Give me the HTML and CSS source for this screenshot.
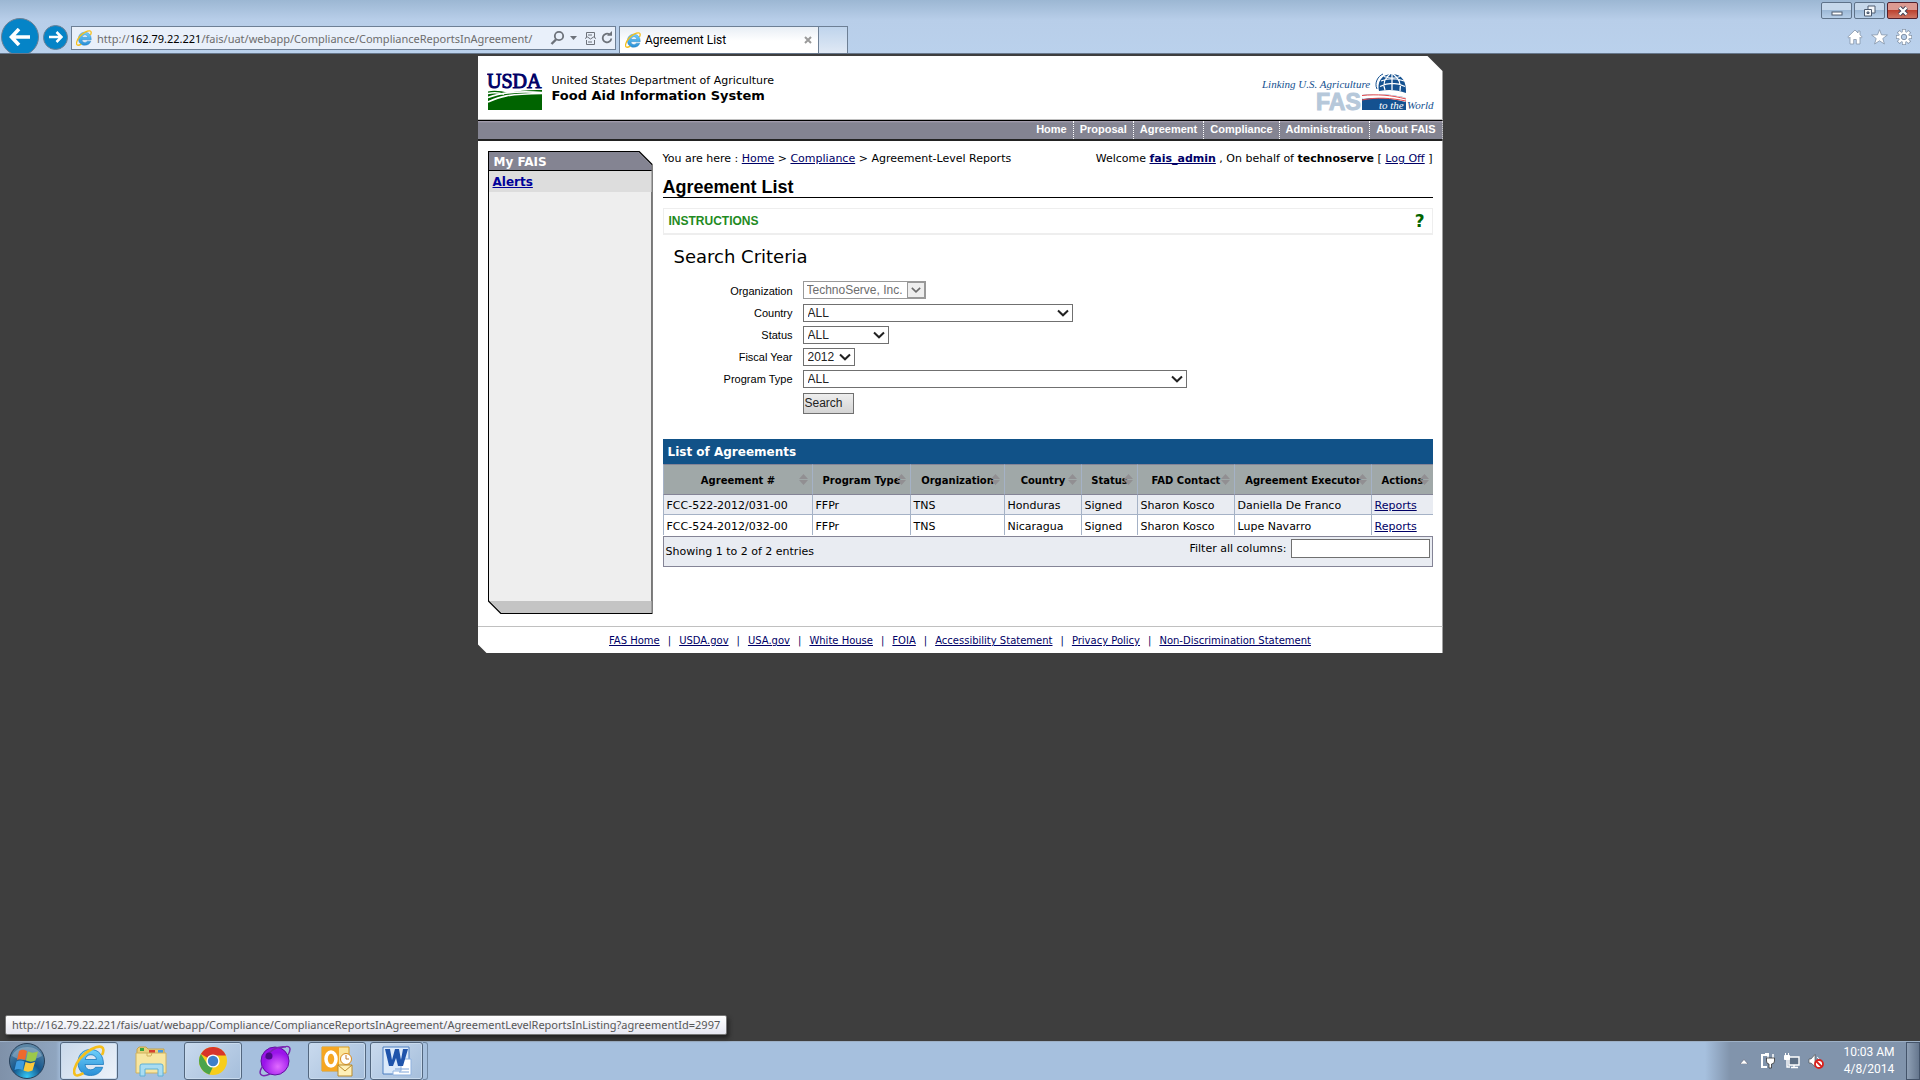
FILE: index.html
```html
<!DOCTYPE html>
<html lang="en">
<head>
    <meta charset="UTF-8">
    <meta name="viewport" content="width=device-width, initial-scale=1.0">
    <title>Agreement List</title>
    <link rel="stylesheet" href="styles.css">
</head>
<body>
    <!-- shared shapes -->
    <svg width="0" height="0" class="defs">
        <defs>
            <linearGradient id="ieBlue" x1="0" y1="0" x2="0" y2="1">
                <stop offset="0" stop-color="#6fd0fb"/>
                <stop offset="1" stop-color="#2a8fd6"/>
            </linearGradient>
            <symbol id="ie" viewBox="0 0 32 32">
                <path d="M30.500 19.500H12c.4 3.600 2.500 5.300 5.500 5.300 2.300 0 4-.9 4.900-2.500h7.300C27.800 27.500 23.600 30.500 17.500 30.500 9.800 30.500 5 25.300 5 17.500S10 4.500 17.700 4.500 30.500 10 30.500 19.500zM12.200 14.500h11.300c-.3-3-2.500-4.800-5.600-4.800s-5.200 1.800-5.700 4.800z" fill="url(#ieBlue)" stroke="#1b78bd" stroke-width=".8"/>
                <path d="M29 10c2-4 1.800-7-.4-8C24 .2 13 6 7 13.500 1.500 20.500-.5 28 2.500 30c1.900 1.200 4.700.2 8-1.800" fill="none" stroke="#f5bf1c" stroke-width="2.600"/>
            </symbol>
            <symbol id="sort" viewBox="0 0 9 11">
                <path d="M4.500 0L9 5H0zM4.500 11L0 6h9z" fill="#918f92"/>
            </symbol>
            <symbol id="chevron" viewBox="0 0 12 8">
                <path d="M1 1.500L6 6.300 11 1.500" fill="none" stroke="currentColor" stroke-width="2"/>
            </symbol>
        </defs>
    </svg>

    <header class="browser">
        <div class="nav-buttons">
            <button class="nav-button back" aria-label="Back">
                <svg width="22" height="18" viewBox="0 0 22 18"><path d="M10 1L2.500 9l7.500 8M3 9h18" fill="none" stroke="#fff" stroke-width="3.600"/></svg>
            </button>
            <button class="nav-button forward" aria-label="Forward">
                <svg width="14" height="12" viewBox="0 0 14 12"><path d="M7.500 1L12.500 6l-5 5M12.500 6H0" fill="none" stroke="#fff" stroke-width="2.500"/></svg>
            </button>
        </div>
        <div class="address">
            <svg width="16" height="16"><use href="#ie"/></svg>
            <span class="url">http://<b>162.79.22.221</b>/fais/uat/webapp/Compliance/ComplianceReportsInAgreement/</span>
            <svg width="66" height="16" viewBox="0 0 66 16" fill="none" stroke="#6d727a">
                <circle cx="10" cy="6" r="4.200" stroke-width="1.800"/>
                <path d="M7 9.500L2.500 14" stroke-width="2.400"/>
                <path d="M21 6h7l-3.500 4z" fill="#6d727a" stroke="none"/>
                <path d="M37.500 7V2.500h8V7M37.500 10v4.500h8V10M36 8.500l2.500-1.500 3 2 3-2 2.500 1.500M39 5h4M39 12h4"/>
                <path d="M60.500 4.500a4.300 4.300 0 1 0 1.800 4" stroke-width="1.800"/>
                <path d="M58 5.800h5V1z" fill="#6d727a" stroke="none"/>
            </svg>
        </div>
        <div class="tab">
            <svg width="16" height="16"><use href="#ie"/></svg>
            <span class="tab-title">Agreement List</span>
            <svg width="8" height="8" viewBox="0 0 8 8"><path d="M1 1l6 6M7 1L1 7" stroke="#9a9a9a" stroke-width="2"/></svg>
        </div>
        <div class="new-tab"></div>
        <div class="browser-right">
            <div class="window-buttons">
                <button aria-label="Minimize"><svg width="12" height="12" viewBox="0 0 12 12"><rect x="1" y="7" width="10" height="3" fill="#fff" stroke="#4c5a6e"/></svg></button>
                <button aria-label="Restore"><svg width="14" height="12" viewBox="0 0 14 12" fill="#f4f7fa" stroke="#4c5a6e"><path d="M5 1h7v7H5z"/><path d="M1.500 4.500h7v6.500h-7z"/><path d="M4 7h2v1.500H4z" fill="#90a6c2"/></svg></button>
                <button class="close" aria-label="Close"><svg width="12" height="10" viewBox="0 0 12 10"><path d="M2.500 1.500l7 7M9.500 1.500l-7 7" stroke="#3a3f55" stroke-width="4.200"/><path d="M2.500 1.500l7 7M9.500 1.500l-7 7" stroke="#fff" stroke-width="2.400"/></svg></button>
            </div>
            <div class="tools">
                <svg width="16" height="16" viewBox="0 0 16 16" fill="#fff" stroke="#8494a8" stroke-width=".8"><path d="M8 1L.8 8l1.200 1.200 1-1V15h3.700v-4.500h2.600V15H13V8.200l1 1L15.200 8 13 5.800V2h-2v2z"/></svg>
                <svg width="17" height="16" viewBox="0 0 17 16" fill="#fff" stroke="#8494a8" stroke-width=".8"><path d="M8.500.7l2 5.100 5.900.2-4.600 3.500 1.600 5.500-4.900-3.200L3.600 15l1.600-5.500L.6 6l5.900-.2z"/></svg>
                <svg width="16" height="16" viewBox="0 0 16 16"><g stroke="#8494a8" stroke-width="4"><path d="M8 0v16M0 8h16M2.300 2.300l11.400 11.400M13.700 2.300L2.300 13.700"/></g><g stroke="#fff" stroke-width="2.600"><path d="M8 .7v14.600M.7 8h14.600M2.800 2.800l10.400 10.400M13.200 2.800L2.800 13.200"/></g><circle cx="8" cy="8" r="5" fill="#fff"/><circle cx="8" cy="8" r="2.700" fill="#b8cee9" stroke="#8494a8"/></svg>
            </div>
        </div>
    </header>

    <main class="viewport">
        <div class="page">
            <div class="banner">
                <svg width="56" height="40" viewBox="0 0 56 40" class="usda" role="img" aria-label="USDA">
                    <text x="0" y="17" class="usda-text">USDA</text>
                    <path d="M1 20.500c6-1.500 14-.5 20 1.500 11-2.400 22-3.400 34-3v20H1z" fill="#006400"/>
                    <path d="M1 22.500c7-1.500 12-.6 16 .8M1 26.500c14-5.500 33-6.500 54-5M1 31c12-5.500 19-8 54-8.500" fill="none" stroke="#fff" stroke-width="1.600"/>
                </svg>
                <div class="banner-title">
                    <span>United States Department of Agriculture</span>
                    <strong>Food Aid Information System</strong>
                </div>
                <svg width="178" height="48" viewBox="0 0 178 48" class="fas" role="img" aria-label="Linking U.S. Agriculture to the World">
                    <text x="2" y="17" class="fas-script">Linking U.S. Agriculture</text>
                    <text x="56" y="39" class="fas-big">FAS</text>
                    <path d="M102 24c14-2 30-1 44 3v12h-44z" fill="#145190"/>
                    <path d="M102 26c15-2 29-1 44 3" fill="none" stroke="#fff" stroke-width="4"/>
                    <path d="M102 24.500c15-1.500 29-.5 44 3.500M102 29c15-3 29-2 44 1" fill="none" stroke="#e3474b"/>
                    <path d="M119 20c-2-8 2-17 13-17s14.500 9 14 19c-8-3-17-4-27-2z" fill="#145190"/>
                    <path d="M120 15.500c8-4 17-4 25 0M121 10c7-3 16-3 23 0M124 5.500c5 2 11 2 16 0M130 3c-6 5-7 11-5 16M133 3c7 5 8 12 7 17M132 3v16" fill="none" stroke="#fff" stroke-width="1.300"/>
                    <path d="M117 18c-3-6 1-13 6-15" fill="none" stroke="#145190"/>
                    <text x="119" y="38" class="fas-script on-blue">to the</text>
                    <text x="147" y="38" class="fas-script">World</text>
                </svg>
            </div>

            <nav class="menu">
                <a href="#">Home</a>
                <a href="#">Proposal</a>
                <a href="#">Agreement</a>
                <a href="#">Compliance</a>
                <a href="#">Administration</a>
                <a href="#">About FAIS</a>
            </nav>

            <div class="columns">
                <aside class="sidebar">
                    <div class="sidebar-inner">
                        <h2>My FAIS</h2>
                        <a href="#">Alerts</a>
                        <div class="sidebar-foot"></div>
                    </div>
                </aside>

                <section class="content">
                    <div class="crumbs">
                        <div>You are here : <a href="#">Home</a> &gt; <a href="#">Compliance</a> &gt; Agreement-Level Reports</div>
                        <div>Welcome <a href="#"><b>fais_admin</b></a> , On behalf of <b>technoserve</b> [ <a href="#">Log Off</a> ]</div>
                    </div>
                    <h1>Agreement List</h1>
                    <div class="instructions">
                        <span>INSTRUCTIONS</span>
                        <span class="help">?</span>
                    </div>

                    <h3>Search Criteria</h3>
                    <form class="criteria">
                        <label for="organization">Organization</label>
                        <div class="select disabled">
                            <select id="organization" disabled><option>TechnoServe, Inc.</option></select>
                            <svg width="10" height="8"><use href="#chevron"/></svg>
                        </div>
                        <label for="country">Country</label>
                        <div class="select country">
                            <select id="country"><option>ALL</option></select>
                            <svg width="12" height="8"><use href="#chevron"/></svg>
                        </div>
                        <label for="status">Status</label>
                        <div class="select status">
                            <select id="status"><option>ALL</option></select>
                            <svg width="12" height="8"><use href="#chevron"/></svg>
                        </div>
                        <label for="year">Fiscal Year</label>
                        <div class="select year">
                            <select id="year"><option>2012</option></select>
                            <svg width="12" height="8"><use href="#chevron"/></svg>
                        </div>
                        <label for="program">Program Type</label>
                        <div class="select program">
                            <select id="program"><option>ALL</option></select>
                            <svg width="12" height="8"><use href="#chevron"/></svg>
                        </div>
                        <button type="button">Search</button>
                    </form>

                    <h4>List of Agreements</h4>
                    <table class="agreements">
                        <colgroup>
                            <col class="c-number"><col class="c-type"><col class="c-org"><col class="c-country">
                            <col class="c-status"><col class="c-contact"><col class="c-executor"><col class="c-actions">
                        </colgroup>
                        <thead>
                            <tr>
                                <th>Agreement #<svg width="9" height="11"><use href="#sort"/></svg></th>
                                <th>Program Type<svg width="9" height="11"><use href="#sort"/></svg></th>
                                <th>Organization<svg width="9" height="11"><use href="#sort"/></svg></th>
                                <th>Country<svg width="9" height="11"><use href="#sort"/></svg></th>
                                <th>Status<svg width="9" height="11"><use href="#sort"/></svg></th>
                                <th>FAD Contact<svg width="9" height="11"><use href="#sort"/></svg></th>
                                <th>Agreement Executor<svg width="9" height="11"><use href="#sort"/></svg></th>
                                <th>Actions<svg width="9" height="11"><use href="#sort"/></svg></th>
                            </tr>
                        </thead>
                        <tbody>
                            <tr>
                                <td>FCC-522-2012/031-00</td>
                                <td>FFPr</td>
                                <td>TNS</td>
                                <td>Honduras</td>
                                <td>Signed</td>
                                <td>Sharon Kosco</td>
                                <td>Daniella De Franco</td>
                                <td><a href="#">Reports</a></td>
                            </tr>
                            <tr>
                                <td>FCC-524-2012/032-00</td>
                                <td>FFPr</td>
                                <td>TNS</td>
                                <td>Nicaragua</td>
                                <td>Signed</td>
                                <td>Sharon Kosco</td>
                                <td>Lupe Navarro</td>
                                <td><a href="#">Reports</a></td>
                            </tr>
                        </tbody>
                    </table>
                    <div class="table-foot">
                        <span>Showing 1 to 2 of 2 entries</span>
                        <div class="filter">
                            <label for="filter">Filter all columns:</label>
                            <input type="text" id="filter">
                        </div>
                    </div>
                </section>
            </div>

            <footer class="links">
                <a href="#">FAS Home</a><i>|</i>
                <a href="#">USDA.gov</a><i>|</i>
                <a href="#">USA.gov</a><i>|</i>
                <a href="#">White House</a><i>|</i>
                <a href="#">FOIA</a><i>|</i>
                <a href="#">Accessibility Statement</a><i>|</i>
                <a href="#">Privacy Policy</a><i>|</i>
                <a href="#">Non-Discrimination Statement</a>
            </footer>
        </div>
        <div class="status-tip">http://162.79.22.221/fais/uat/webapp/Compliance/ComplianceReportsInAgreement/AgreementLevelReportsInListing?agreementId=2997</div>
    </main>

    <div class="taskbar">
        <button class="start" aria-label="Start">
            <svg width="38" height="38" viewBox="0 0 38 38">
                <defs>
                    <radialGradient id="orb" cx=".5" cy=".95" r=".9">
                        <stop offset="0" stop-color="#35c8f5"/>
                        <stop offset=".45" stop-color="#14568c"/>
                        <stop offset="1" stop-color="#5d87a6"/>
                    </radialGradient>
                </defs>
                <circle cx="19" cy="19" r="17.500" fill="url(#orb)" stroke="#28405a"/>
                <path d="M4 14C8 3 29 1 34 14c-9 5-21 6-30 0z" fill="#fff" opacity=".25"/>
                <path d="M11 9c3-2 5-1.500 8 0l-2 9c-3-1.500-5-1.500-8 0z" fill="#ee6a2c"/>
                <path d="M20 9.500c3 1.500 6 1.500 10 0l-2.500 9c-3 1.500-6 1.500-9.500 0z" fill="#9cc84a"/>
                <path d="M8.500 19.500c3-1.500 5-1.500 8 0l-2 8.500c-3-1.500-5-1.500-8 0z" fill="#3e9be0"/>
                <path d="M17.500 20c3.500 1.500 6 1.500 9.500 0l-2.500 8.500c-3 1.500-6 1.500-9 0z" fill="#fbc93b"/>
            </svg>
        </button>
        <button class="task active" aria-label="Internet Explorer"><svg width="32" height="32"><use href="#ie"/></svg></button>
        <button class="task idle" aria-label="Windows Explorer">
            <svg width="32" height="32" viewBox="0 0 32 32">
                <path d="M2 4l2-2h7l2 2h16v6H2z" fill="#e9cf7a" stroke="#c4a24d"/>
                <path d="M5 3h4v3H5z" fill="#3aa63e"/><path d="M14 5h6v3h-6z" fill="#d8412f"/><path d="M23 5h5v3h-5z" fill="#4a9be0"/>
                <path d="M1 8h30v20H1z" fill="#f7e6a1" stroke="#d1b25e"/>
                <path d="M12 8v3h4l1-3" fill="none" stroke="#d1b25e"/>
                <path d="M5 31V21q0-2 2-2h19q2 0 2 2v10h-5v-7H10v7z" fill="#a9dcf2" stroke="#5fb0d6"/>
            </svg>
        </button>
        <button class="task" aria-label="Chrome">
            <svg width="32" height="32" viewBox="0 0 32 32">
                <circle cx="16" cy="16" r="14" fill="#f7cd1b"/>
                <path d="M16 16L3.900 9A14 14 0 0 1 29 10.500H16z" fill="#d8352a"/>
                <path d="M3.900 9l7 11 5 2-3.500 7.500A14 14 0 0 1 3.900 9z" fill="#4aa44a"/>
                <circle cx="16" cy="16" r="6.600" fill="#fff"/><circle cx="16" cy="16" r="5.200" fill="#3f7fc9"/>
            </svg>
        </button>
        <button class="task idle" aria-label="Browser">
            <svg width="32" height="32" viewBox="0 0 32 32">
                <defs><radialGradient id="violet" cx=".6" cy=".7"><stop offset="0" stop-color="#e06bff"/><stop offset="1" stop-color="#9a14ea"/></radialGradient></defs>
                <circle cx="16" cy="16" r="14" fill="url(#violet)" stroke="#6210a0"/>
                <path d="M4 21C-2 29 2 33 11 29M22 3c9-4 11 0 7 7M6 13C12 4 20 1 27 2" fill="none" stroke="#7a27b0" stroke-width="1.500"/>
                <circle cx="10" cy="11" r="3.500" fill="#4e0a8c"/>
            </svg>
        </button>
        <button class="task" aria-label="Outlook">
            <svg width="32" height="32" viewBox="0 0 32 32">
                <path d="M1 2h27v24H1z" fill="#fbe49a" stroke="#d99a1b"/>
                <path d="M1 2h17v24H1z" fill="#f5a623"/>
                <ellipse cx="10" cy="14" rx="5" ry="7" fill="none" stroke="#fff" stroke-width="3.500"/>
                <circle cx="25" cy="14" r="5.500" fill="#fff" stroke="#d98b1b"/>
                <path d="M25 10v4h3" fill="none" stroke="#c0762a"/>
                <path d="M17 20h14v11H17z" fill="#fff0b8" stroke="#b98b2c"/><path d="M17 20l7 6 7-6" fill="none" stroke="#b98b2c"/>
            </svg>
        </button>
        <button class="task word" aria-label="Word">
            <svg width="32" height="32" viewBox="0 0 32 32">
                <path d="M2 2h26v27H2z" fill="#dceafa" stroke="#4d7fc0"/>
                <path d="M20 14h10v16H12v-4h8z" fill="#fff" stroke="#8fb2e0"/>
                <path d="M14 24h14M18 27h10" stroke="#7da3d8"/>
                <path d="M4 4h5l2 11 3-11h4l2 11 2-11h5l-5 17h-5l-2-8-3 8H8z" fill="#1f54ab"/>
            </svg>
        </button>
        <span class="stack"></span>
        <div class="tray">
            <svg width="8" height="5" viewBox="0 0 8 5"><path d="M0 5l4-4.500L8 5z" fill="#fff" stroke="#556"  stroke-width=".5"/></svg>
            <svg width="16" height="16" viewBox="0 0 16 16"><path d="M8 2H2v12h5M5 1h3v2" fill="none" stroke="#fff" stroke-width="2"/><path d="M8 1v4M13 1v4" stroke="#fff" stroke-width="1.500"/><path d="M6.500 5h8v3q0 3-3 3v4H9v-4q-2.500 0-2.500-3z" fill="#fff" stroke="#333" stroke-width=".8"/></svg>
            <svg width="16" height="16" viewBox="0 0 16 16"><path d="M5 4h10v8H5z" fill="#5f7186" stroke="#fff" stroke-width="1.400"/><path d="M7 14.500h7M10 12v2M3 7v7h3" stroke="#fff" stroke-width="1.400" fill="none"/><path d="M.5 2.500h5v4h-5zM1.500 0v3M4.500 0v3" fill="#fff" stroke="#fff"/></svg>
            <svg width="16" height="16" viewBox="0 0 16 16"><path d="M1 6h2l4-4.500v12L3 10H1z" fill="#fff" stroke="#444" stroke-width=".6"/><path d="M9 4q2 1 2 3" fill="none" stroke="#fff"/><circle cx="11" cy="11" r="4" fill="#fff" stroke="#d8201c" stroke-width="1.800"/><path d="M8 8l6 6" stroke="#d8201c" stroke-width="1.800"/></svg>
            <div class="clock"><span>10:03 AM</span><span>4/8/2014</span></div>
        </div>
        <span class="show-desktop"></span>
    </div>
</body>
</html>
```

FILE: styles.css
```css
* {
    box-sizing: border-box;
}

body {
    margin: 0;
    min-height: 100vh;
    display: flex;
    flex-direction: column;
    background: #3e3e3e;
    color: #000;
    font-family: "DejaVu Sans", Verdana, sans-serif;
    font-size: 11px;
}

svg {
    display: block;
    flex: none;
}

button {
    margin: 0;
    padding: 0;
    border: none;
    background: none;
}

a {
    color: #000066;
}

.defs {
    position: absolute;
}

/* browser window */
.browser {
    display: flex;
    align-items: flex-end;
    height: 54px;
    border-bottom: 1px solid #66768a;
    background: linear-gradient(#9cb7d3, #b8cee9 20px, #bad1ec);
    font-family: Roboto, "Segoe UI", sans-serif;
    font-size: 12px;
    overflow: hidden;
}

.nav-buttons {
    display: flex;
    align-items: center;
    gap: 4px;
    width: 71px;
    height: 32px;
    padding-left: 1px;
}

.nav-button {
    display: flex;
    align-items: center;
    justify-content: center;
    flex: none;
    border: 1px solid #6c8196;
    border-radius: 50%;
    background: #0584c7;
}

.back {
    width: 38px;
    height: 38px;
}

.forward {
    width: 25px;
    height: 25px;
}

.address {
    display: flex;
    align-items: center;
    gap: 5px;
    width: 545px;
    height: 24px;
    margin: 0 3px 3px 0;
    padding: 0 0 0 4px;
    border: 1px solid #6d7f95;
    background: #e9f0fa;
    color: #6d6d6d;
    font-family: "Noto Sans", "Segoe UI", sans-serif;
    font-size: 11px;
}

.url {
    flex: 1;
    white-space: nowrap;
}

.url b {
    color: #000;
    font-weight: normal;
}

.tab {
    display: flex;
    align-items: center;
    gap: 4px;
    width: 200px;
    height: 27px;
    padding: 0 6px 0 5px;
    border: 1px solid #6d7f95;
    border-bottom: none;
    background: linear-gradient(#e8eef5, #fff 14px);
}

.tab-title {
    flex: 1;
}

.new-tab {
    width: 29px;
    height: 27px;
    border: 1px solid #6d7f95;
    border-width: 1px 1px 0 0;
    background: linear-gradient(#bfd4ec, #e0e9f5);
}

.browser-right {
    display: flex;
    flex-direction: column;
    justify-content: space-between;
    align-items: flex-end;
    height: 53px;
    margin-left: auto;
    padding: 2px 2px 8px 0;
}

.window-buttons {
    display: flex;
    gap: 2px;
}

.window-buttons button {
    display: flex;
    align-items: center;
    justify-content: center;
    width: 31px;
    height: 17px;
    border: 1px solid #5e7289;
    border-radius: 2px;
    background: linear-gradient(#c6d8eb 50%, #9db9d7 50%, #b6cee8);
}

.window-buttons .close {
    border-color: #53202c;
    background: linear-gradient(#dc9a92 50%, #bc4230 50%, #cf7664);
}

.tools {
    display: flex;
    gap: 8px;
    padding-right: 6px;
}

/* page */
.viewport {
    position: relative;
    flex: 1;
    padding-top: 2px;
}

.page {
    max-width: 965px;
    margin: 0 auto;
    background: #fff;
    clip-path: polygon(0 0, calc(100% - 15px) 0, 100% 15px, 100% 100%, 9px 100%, 0 calc(100% - 9px));
}

.banner {
    display: flex;
    align-items: flex-start;
    gap: 9px;
    height: 64px;
    padding: 15px 5px 0 9px;
    border-bottom: 1px solid #c0c0c0;
}

.usda-text {
    font: 20px "Liberation Serif", serif;
    fill: #000066;
    stroke: #000066;
}

.banner-title {
    display: flex;
    flex-direction: column;
    flex: 1;
    padding-top: 2px;
    font-size: 11px;
    line-height: 15px;
}

.banner-title strong {
    font-size: 13px;
}

.fas-script {
    font: italic 11px "Liberation Serif", serif;
    fill: #145190;
}

.fas-script.on-blue {
    fill: #fff;
}

.fas-big {
    font: bold 23px "Liberation Sans", sans-serif;
    fill: #b6c8da;
    stroke: #b6c8da;
}

.menu {
    display: flex;
    justify-content: flex-end;
    height: 21px;
    border-top: 1px solid #000;
    border-bottom: 2px solid #222;
    background: linear-gradient(#aaa3b4, #848492 2px);
    font: bold 11px/17px "Liberation Sans", Arial, sans-serif;
}

.menu a {
    padding: 0 6px;
    border-right: 1px dotted #fff;
    color: #fff;
    text-decoration: none;
}

.columns {
    display: flex;
    gap: 10px;
    padding: 10px 10px 12px;
}

.sidebar {
    display: flex;
    flex: none;
    width: 165px;
    min-height: 463px;
    padding: 1px;
    background: #000;
    clip-path: polygon(0 0, calc(100% - 13px) 0, 100% 13px, 100% 100%, 13px 100%, 0 calc(100% - 13px));
}

.sidebar-inner {
    display: flex;
    flex-direction: column;
    flex: 1;
    background: #eee;
    clip-path: polygon(0 0, calc(100% - 13px) 0, 100% 13px, 100% 100%, 13px 100%, 0 calc(100% - 13px));
    font-size: 12px;
    font-weight: bold;
}

.sidebar h2 {
    margin: 0;
    padding: 2px 0 0 5px;
    border-bottom: 1px solid #000;
    background: #848492;
    color: #fff;
    font-size: 12px;
    line-height: 16px;
}

.sidebar a {
    padding: 1px 0 0 4px;
    background: #ddd;
    color: #000099;
    line-height: 20px;
}

.sidebar-foot {
    height: 12px;
    margin-top: auto;
    background: #c4c4c4;
}

.content {
    flex: 1;
    min-width: 0;
}

.crumbs {
    display: flex;
    justify-content: space-between;
    line-height: 16px;
}

h1 {
    margin: 8px 0 10px;
    padding-top: 2px;
    border-bottom: 1px solid #000;
    font: bold 18px/20px "Liberation Sans", Arial, sans-serif;
}

.instructions {
    display: flex;
    justify-content: space-between;
    align-items: center;
    height: 27px;
    padding: 0 7px 0 5px;
    border: 1px solid #eee;
    border-bottom-width: 2px;
    color: #228b22;
    font: bold 12px "Liberation Sans", Arial, sans-serif;
}

.help {
    color: #006400;
    font: bold 17px "DejaVu Sans", Verdana, sans-serif;
}

h3 {
    margin: 11px 11px 13px;
    font-size: 18px;
    font-weight: normal;
    line-height: 22px;
}

/* search form */
.criteria {
    display: grid;
    grid-template-columns: 130px 1fr;
    gap: 4px 10px;
    align-items: center;
    justify-items: start;
    margin-bottom: 25px;
    font: 11px "Liberation Sans", Arial, sans-serif;
}

.criteria label {
    justify-self: end;
}

.select {
    position: relative;
    color: #222;
}

.select select {
    display: block;
    width: 100%;
    height: 18px;
    padding: 0 4px 1px;
    border: 1px solid #707070;
    border-radius: 0;
    appearance: none;
    background: #fff;
    color: inherit;
    font: 12px "Liberation Sans", Arial, sans-serif;
}

.select svg {
    position: absolute;
    right: 4px;
    top: 5px;
    pointer-events: none;
}

.select.disabled {
    width: 123px;
    margin-bottom: 1px;
    color: #6d6d6d;
}

.select.disabled select {
    padding-left: 3px;
    border-color: #999;
    opacity: 1;
}

.select.disabled svg {
    box-sizing: content-box;
    right: 1px;
    top: 1px;
    padding: 3px;
    border: 1px solid #999;
    background: #eee;
}

.country {
    width: 270px;
}

.status {
    width: 86px;
}

.year {
    width: 52px;
}

.program {
    width: 384px;
}

.criteria button {
    grid-column: 2;
    width: 51px;
    height: 21px;
    margin-top: 1px;
    padding: 0 0 2px 1px;
    border: 1px solid #707070;
    background: linear-gradient(#eee, #d4d4d4);
    color: #222;
    font: 12px "Liberation Sans", Arial, sans-serif;
    text-align: left;
}

/* agreements table */
h4 {
    margin: 0;
    padding: 2px 0 0 5px;
    background: #115288;
    color: #fff;
    font-size: 12px;
    line-height: 23px;
}

.agreements {
    width: 100%;
    table-layout: fixed;
    border-collapse: separate;
    border-spacing: 0;
}

.c-number { width: 149px; }
.c-type { width: 98px; }
.c-org { width: 94px; }
.c-country { width: 77px; }
.c-status { width: 56px; }
.c-contact { width: 97px; }
.c-executor { width: 137px; }
.c-actions { width: auto; }

.agreements th {
    position: relative;
    height: 31px;
    padding: 1px 0 0 1px;
    border: 1px solid #848496;
    border-width: 1px 0;
    border-left: 1px solid #a5b2c6;
    background: #a0a8a8;
    font-size: 10px;
    white-space: nowrap;
}

.agreements th svg {
    position: absolute;
    right: 4px;
    top: 9px;
}

.agreements td {
    height: 20px;
    padding: 2px 3px 0;
    border-left: 1px solid #a5b2c6;
    border-bottom: 1px solid #a5b2c6;
    white-space: nowrap;
}

.agreements tbody tr:nth-child(odd) {
    background: #e9ecf2;
}

.agreements tbody tr:last-child td {
    border-bottom: none;
}

.table-foot {
    display: flex;
    justify-content: space-between;
    align-items: center;
    height: 31px;
    margin-top: 1px;
    padding: 0 2px;
    border: 1px solid #848496;
    background: #e9ecf2;
}

.filter {
    display: flex;
    align-items: center;
    gap: 4px;
    padding-bottom: 6px;
}

.filter input {
    width: 139px;
    height: 19px;
    border: 1px solid #707070;
    background: #fff;
}

.links {
    display: flex;
    justify-content: center;
    gap: 8px;
    padding: 7px 0 5px;
    border-top: 1px solid #c0c0c0;
    color: #000066;
    font-size: 10px;
    line-height: 14px;
}

.links i {
    font-style: normal;
}

.status-tip {
    position: absolute;
    left: 5px;
    bottom: 6px;
    padding: 0 6px;
    border: 1px solid #767676;
    border-radius: 2px;
    background: linear-gradient(#fff, #e6e7f1);
    box-shadow: 2px 3px 4px #222;
    color: #575757;
    font: 11px/18px "Noto Sans", "Segoe UI", sans-serif;
    white-space: nowrap;
}

/* taskbar */
.taskbar {
    display: flex;
    align-items: center;
    height: 39px;
    border-top: 1px solid #9db0c6;
    background: linear-gradient(to right, #7f91a9, #8fa5bf 56px, #a6c0de 62px, #a6c0de calc(100% - 215px), #8194ac calc(100% - 190px));
    font-family: Roboto, "Segoe UI", sans-serif;
}

.start {
    width: 60px;
    padding-left: 8px;
}

.task {
    display: flex;
    align-items: center;
    justify-content: center;
    width: 58px;
    height: 38px;
    margin-right: 4px;
    border: 1px solid #53677f;
    border-radius: 3px;
    background: linear-gradient(135deg, #c9daee, #a5bedb);
    box-shadow: inset 0 0 0 1px #c8daed;
}

.task.active {
    background: linear-gradient(135deg, #c9d8ea, #edf3fa);
}

.task.idle {
    border: none;
    background: none;
    box-shadow: none;
}

.task.word {
    width: 53px;
    margin-right: 0;
}

.stack {
    width: 5px;
    height: 38px;
    border: 1px solid #7088a3;
    border-left: none;
    border-radius: 0 3px 3px 0;
}

.tray {
    display: flex;
    align-items: center;
    gap: 8px;
    margin-left: auto;
}

.tray svg:first-child {
    margin-right: 4px;
}

.clock {
    display: flex;
    flex-direction: column;
    width: 74px;
    color: #fff;
    font-size: 12px;
    line-height: 17px;
    text-align: center;
}

.show-desktop {
    width: 14px;
    height: 38px;
    border: 1px solid #44546a;
    background: linear-gradient(to right, #8fa0b5, #66778e);
}
```
